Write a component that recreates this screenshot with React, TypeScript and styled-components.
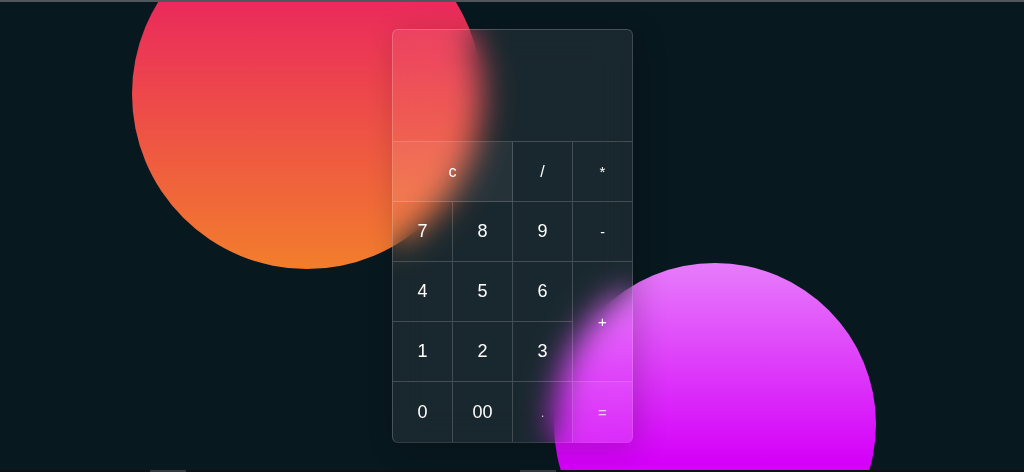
import React from "react";
import styled, { createGlobalStyle } from "styled-components";

const Global = createGlobalStyle`
  html, body { margin: 0; padding: 0; height: 100%; }
  body { background: #08181f; font-family: "Liberation Sans", Arial, sans-serif; overflow: hidden; }
  #root { height: 100%; }
`;

const Page = styled.div`
  height: 100vh;
  display: flex;
  flex-direction: column;
  background: #08181f;
`;

const TopLine = styled.div`
  height: 2px;
  flex: none;
  background: #50565a;
`;

const Stage = styled.main`
  flex: 1;
  min-height: 0;
  overflow: hidden;
  display: grid;
  grid-template: 1fr / 1fr;
  place-items: center;
`;

const Blob = styled.div<{ $size: number; $dx: number; $dy: number; $bg: string }>`
  grid-area: 1 / 1;
  width: ${(p) => p.$size}px;
  height: ${(p) => p.$size}px;
  border-radius: 50%;
  background: ${(p) => p.$bg};
  transform: translate(${(p) => p.$dx}px, ${(p) => p.$dy}px);
`;

const Glass = styled.div`
  grid-area: 1 / 1;
  z-index: 2;
  margin-left: 1px;
  background: rgba(255, 255, 255, 0.07);
  backdrop-filter: blur(16px);
  -webkit-backdrop-filter: blur(16px);
  border: 1px solid rgba(255, 255, 255, 0.2);
  border-right-color: rgba(255, 255, 255, 0.16);
  border-bottom-color: rgba(255, 255, 255, 0.1);
  border-radius: 6px;
  overflow: hidden;
  box-shadow: 5px 5px 30px rgba(0, 0, 0, 0.2);
`;

const Keys = styled.div`
  display: grid;
  grid-template-columns: repeat(3, 60px) 59px;
  grid-template-rows: 112px repeat(5, 60px);
`;

const Display = styled.div`
  grid-column: span 4;
  box-sizing: border-box;
  border-bottom: 1px solid rgba(255, 255, 255, 0.18);
`;

const Key = styled.span<{ $col?: number; $row?: number; $tint?: boolean; $size?: number; $dim?: boolean; $last?: boolean; $bottom?: boolean }>`
  display: grid;
  place-items: center;
  grid-column: span ${(p) => p.$col ?? 1};
  grid-row: span ${(p) => p.$row ?? 1};
  box-sizing: border-box;
  border-right: ${(p) => (p.$last ? "none" : "1px solid rgba(255, 255, 255, 0.18)")};
  border-bottom: ${(p) => (p.$bottom ? "none" : "1px solid rgba(255, 255, 255, 0.18)")};
  background: ${(p) => (p.$tint ? "rgba(255, 255, 255, 0.05)" : "transparent")};
  color: ${(p) => (p.$dim ? "rgba(255, 255, 255, 0.72)" : "#ffffff")};
  font-size: ${(p) => p.$size ?? 18}px;
  font-family: "Liberation Sans", Arial, sans-serif;
  user-select: none;
`;

const BottomBar = styled.div`
  height: 2px;
  flex: none;
  background: #0c1114;
  display: flex;
  align-items: stretch;
`;

const Thumb = styled.div<{ $left: number }>`
  margin-left: ${(p) => p.$left}px;
  width: 36px;
  background: #34393c;
`;

export default function App() {
  return (
    <Page>
      <Global />
      <TopLine />
      <Stage>
        <Blob $size={350} $dx={-205} $dy={-142} $bg="linear-gradient(#e8106a, #f27e2c)" />
        <Blob $size={322} $dx={203} $dy={188} $bg="linear-gradient(#e77cfb 0%, #d500f9 62%, #cf00f3 100%)" />
        <Glass>
          <Keys>
            <Display />
            <Key $col={2} $tint $size={16}>c</Key>
            <Key $size={16}>/</Key>
            <Key $last $size={15}>*</Key>
            <Key>7</Key>
            <Key>8</Key>
            <Key>9</Key>
            <Key $last $size={14}>-</Key>
            <Key>4</Key>
            <Key>5</Key>
            <Key>6</Key>
            <Key $row={2} $last $size={15}>+</Key>
            <Key>1</Key>
            <Key>2</Key>
            <Key>3</Key>
            <Key $bottom>0</Key>
            <Key $bottom>00</Key>
            <Key $bottom $size={13} $dim>.</Key>
            <Key $bottom $last $tint $size={15} $dim>=</Key>
          </Keys>
        </Glass>
      </Stage>
      <BottomBar>
        <Thumb $left={150} />
        <Thumb $left={334} />
      </BottomBar>
    </Page>
  );
}
